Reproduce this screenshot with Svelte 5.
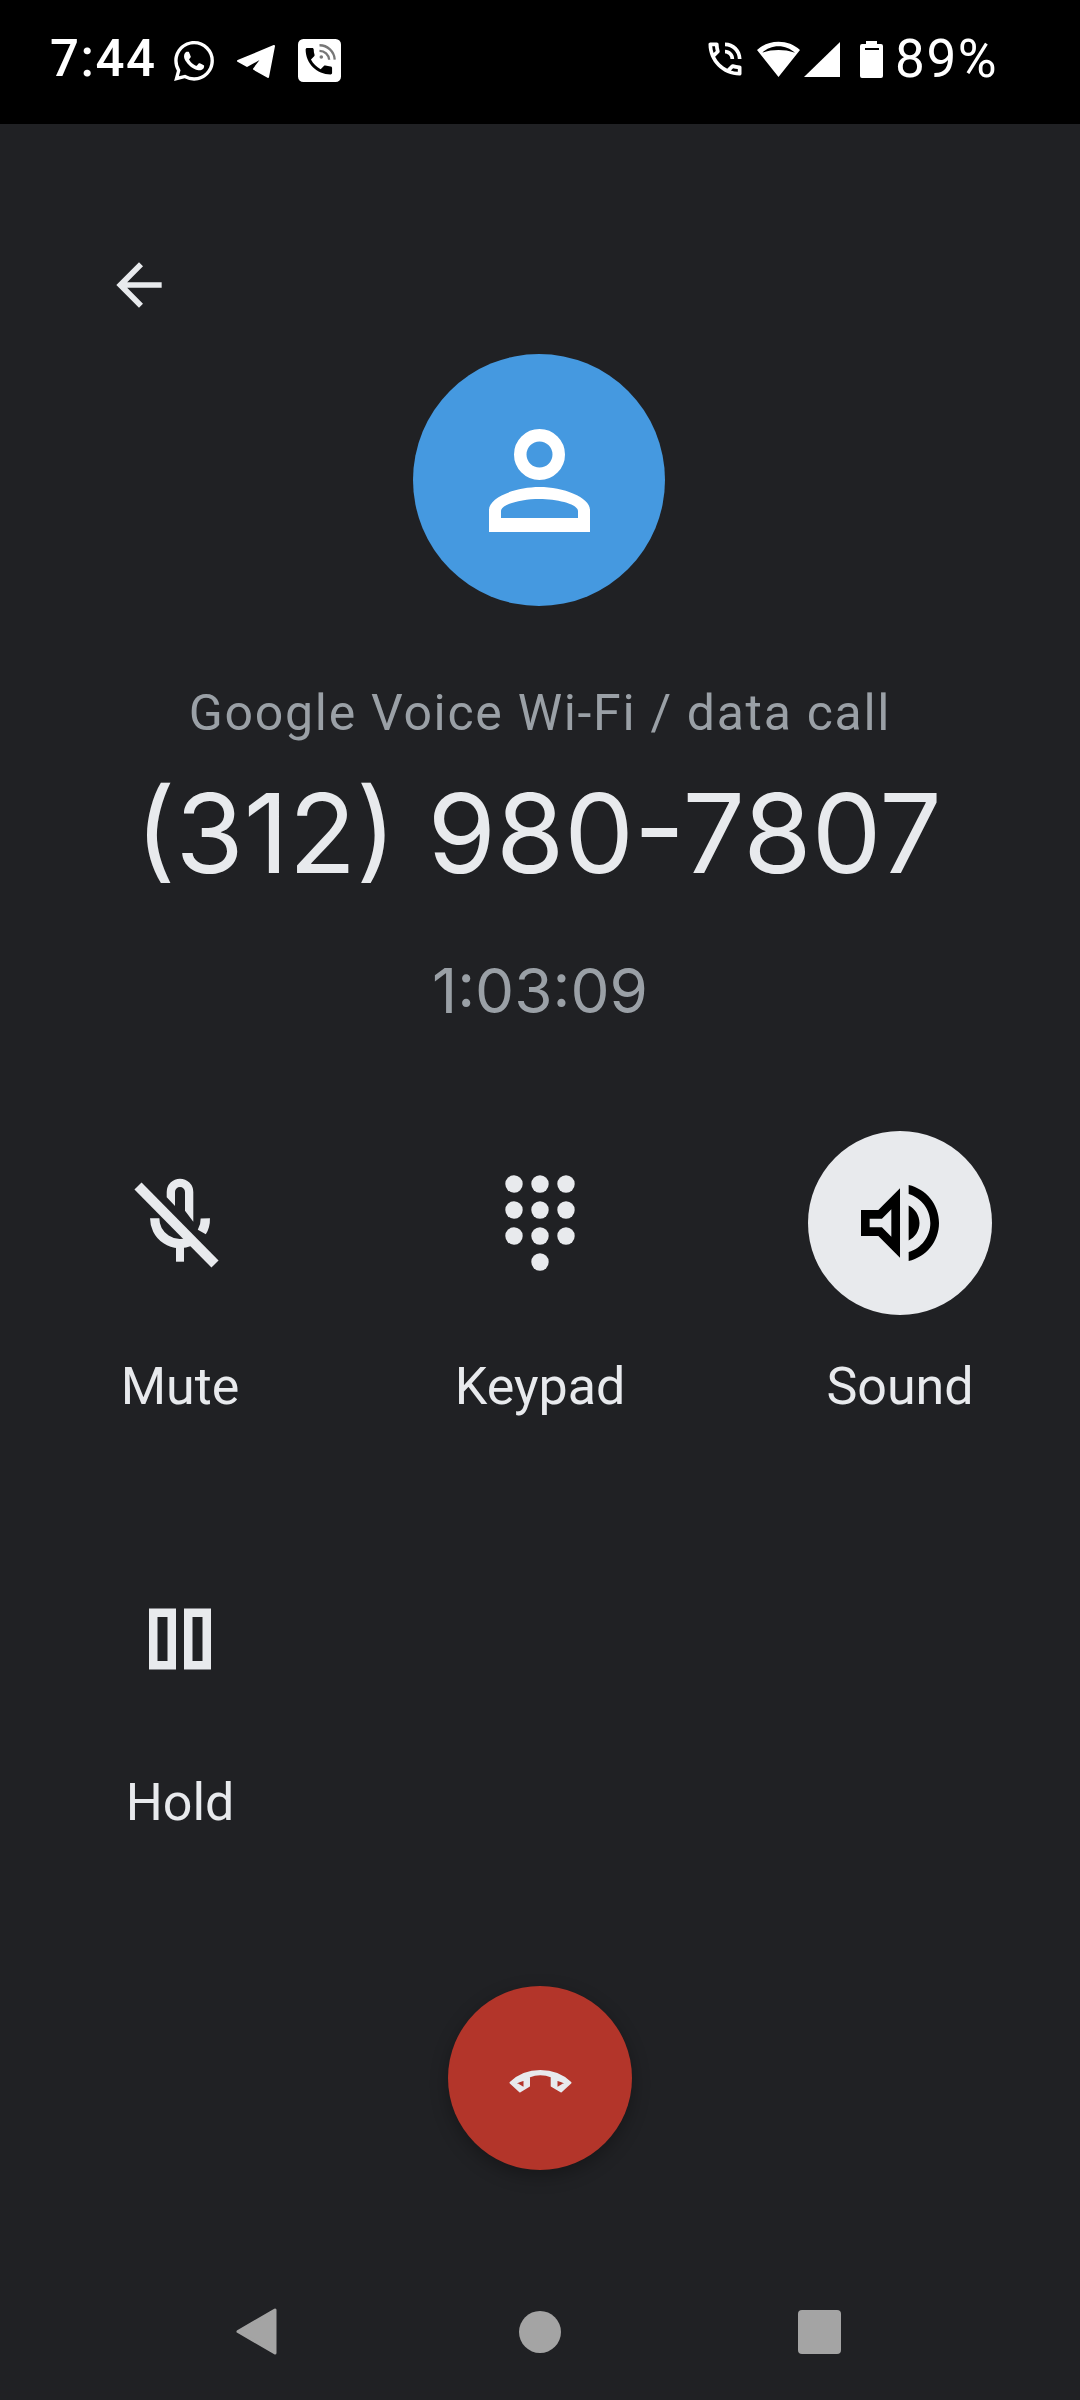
<script>
  const buttons = [
    { label: "Mute", icon: "mute" },
    { label: "Keypad", icon: "keypad" },
    { label: "Sound", icon: "sound", active: true },
    { label: "Hold", icon: "hold" },
  ];
  const dots = [
    [34, 21], [60, 21], [86, 21],
    [34, 47], [60, 47], [86, 47],
    [34, 73], [60, 73], [86, 73],
    [60, 99],
  ];
</script>

<div class="page">
  <header class="status">
    <div class="status-left">
      <span class="clock">7:44</span>
      <svg class="whatsapp" viewBox="0 0 24 24" width="40" height="40">
        <path fill="#fff" d="M17.472 14.382c-.297-.149-1.758-.867-2.03-.967-.273-.099-.471-.148-.67.15-.197.297-.767.966-.94 1.164-.173.199-.347.223-.644.075-.297-.15-1.255-.463-2.39-1.475-.883-.788-1.48-1.761-1.653-2.059-.173-.297-.018-.458.13-.606.134-.133.298-.347.446-.52.149-.174.198-.298.298-.497.099-.198.05-.371-.025-.52-.075-.149-.669-1.612-.916-2.207-.242-.579-.487-.5-.669-.51-.173-.008-.371-.01-.57-.01-.198 0-.52.074-.792.372-.272.297-1.04 1.016-1.04 2.479 0 1.462 1.065 2.875 1.213 3.074.149.198 2.096 3.2 5.077 4.487.709.306 1.262.489 1.694.625.712.227 1.36.195 1.871.118.571-.085 1.758-.719 2.006-1.413.248-.694.248-1.289.173-1.413-.074-.124-.272-.198-.57-.347m-5.421 7.403h-.004a9.87 9.87 0 01-5.031-1.378l-.361-.214-3.741.982.998-3.648-.235-.374a9.86 9.86 0 01-1.51-5.26c.001-5.45 4.436-9.884 9.888-9.884 2.64 0 5.122 1.03 6.988 2.898a9.825 9.825 0 012.893 6.994c-.003 5.45-4.437 9.884-9.885 9.884m8.413-18.297A11.815 11.815 0 0012.05 0C5.495 0 .16 5.335.157 11.892c0 2.096.547 4.142 1.588 5.945L.057 24l6.305-1.654a11.882 11.882 0 005.683 1.448h.005c6.554 0 11.89-5.335 11.893-11.893a11.821 11.821 0 00-3.48-8.413Z" />
      </svg>
      <svg class="telegram" viewBox="0 0 40 36" width="40" height="36">
        <path fill="#fff" stroke="#fff" stroke-width="2" stroke-linejoin="round" d="M2 17 38 2 32 33 18 25 27 13 11 22Z" />
      </svg>
      <svg class="viber" viewBox="0 0 24 24" width="43" height="43">
        <rect width="24" height="24" rx="3" fill="#fff" />
        <path fill="#000" transform="translate(1.8 2.6) scale(.82)" d="M20 15.5c-1.25 0-2.45-.2-3.57-.57-.35-.11-.74-.03-1.02.24l-2.2 2.2c-2.83-1.44-5.15-3.75-6.59-6.59l2.2-2.21c.28-.26.36-.65.25-1C8.7 6.45 8.5 5.25 8.5 4c0-.55-.45-1-1-1H4c-.55 0-1 .45-1 1 0 9.39 7.61 17 17 17 .55 0 1-.45 1-1v-3.5c0-.55-.45-1-1-1z" />
        <path fill="none" stroke="#777" stroke-width="1.3" d="M12 3.5a8.5 8.5 0 0 1 8.5 8M12 6.6a5.4 5.4 0 0 1 5.4 5" />
        <circle cx="13" cy="10" r="1" fill="#777" />
      </svg>
    </div>
    <div class="status-right">
      <svg class="call" viewBox="0 0 24 24" width="44" height="44">
        <path fill="#fff" d="M15 12h2c0-2.76-2.24-5-5-5v2c1.66 0 3 1.34 3 3zm4 0h2c0-4.97-4.03-9-9-9v2c3.87 0 7 3.13 7 7zm1 3.5c-1.25 0-2.45-.2-3.57-.57-.1-.03-.21-.05-.31-.05-.26 0-.51.1-.71.29l-2.2 2.2c-2.83-1.44-5.15-3.75-6.59-6.58l2.2-2.21c.28-.27.36-.66.25-1.01C8.7 6.45 8.5 5.25 8.5 4c0-.55-.45-1-1-1H4c-.55 0-1 .45-1 1 0 9.39 7.61 17 17 17 .55 0 1-.45 1-1v-3.5c0-.55-.45-1-1-1zM5.03 5h1.5c.07.88.22 1.75.45 2.58l-1.2 1.21c-.4-1.21-.66-2.47-.75-3.79zM19 18.97c-1.32-.09-2.6-.35-3.8-.76l1.2-1.2c.85.24 1.71.39 2.59.45v1.51z" />
      </svg>
      <svg class="wifi" viewBox="0 0 43 36" width="43" height="36">
        <path fill="#fff" fill-rule="evenodd" d="M0 9C6 3.5 13 .7 21.5 .7S37 3.500 43 9L21.500 36ZM5 11.700C10 7.500 15 5.300 21.500 5.300S33 7.500 38 11.700C32 9.500 27 8.900 21.500 8.900S11 9.500 5 11.700Z" />
      </svg>
      <svg class="signal" viewBox="0 0 36 35" width="36" height="35">
        <path fill="#fff" d="M0 35 36 0V35Z" />
      </svg>
      <svg class="battery" viewBox="0 0 23 37" width="23" height="37">
        <path fill="#fff" fill-rule="evenodd" d="M6 0H17V3H21A2 2 0 0 1 23 5V35A2 2 0 0 1 21 37H2A2 2 0 0 1 0 35V5A2 2 0 0 1 2 3H6ZM5 7V9H19V7Z" />
      </svg>
      <span class="percent">89%</span>
    </div>
  </header>

  <main class="call-screen">
    <div class="back-row">
      <svg viewBox="0 0 24 24" width="68" height="68">
        <path fill="#e8eaed" d="M20 11H7.830l5.590-5.590L12 4l-8 8 8 8 1.410-1.410L7.830 13H20v-2z" />
      </svg>
    </div>

    <div class="avatar">
      <svg viewBox="0 0 151 151" width="151" height="151">
        <circle cx="75.500" cy="49.500" r="19.250" fill="none" stroke="#fff" stroke-width="12.500" />
        <path fill="#fff" fill-rule="evenodd" d="M25 127V105C25 92 52 82 75.500 82S126 92 126 105V127ZM37 113H114V106C114 99 93 94 75.500 94S37 99 37 106Z" />
      </svg>
    </div>

    <div class="call-type">Google Voice Wi-Fi / data call</div>
    <div class="number">(312) 980-7807</div>
    <div class="timer">1:03:09</div>

    <div class="controls">
      {#each buttons as button}
        <div class="control">
          <div class="control-icon" class:active={button.active}>
            {#if button.icon === "mute"}
              <svg viewBox="0 0 120 120" width="120" height="120">
                <g fill="#e8eaed">
                  <path d="M46.700 34.300V29a13.300 13.300 0 0 1 26.600 0V58.700L65 47.700V29a5 5 0 0 0-10 0V43Z" />
                </g>
                <g fill="none" stroke="#e8eaed">
                  <path stroke-width="9.300" d="M34.700 55.300A25.300 25.300 0 0 0 70 78.500" />
                  <path stroke-width="9.300" d="M85.300 55.300A25.300 25.300 0 0 1 81.800 69" />
                  <path stroke-width="8" d="M60 80.600V98.700" />
                  <path stroke-width="10" d="M18 23 95 101" />
                </g>
              </svg>
            {:else if button.icon === "keypad"}
              <svg viewBox="0 0 120 120" width="120" height="120">
                {#each dots as [x, y]}
                  <circle cx={x} cy={y} r="8.700" fill="#e8eaed" />
                {/each}
              </svg>
            {:else if button.icon === "sound"}
              <svg viewBox="0 0 24 24" width="104" height="104">
                <path fill="#000" d="M3 9v6h4l5 5V4L7 9H3zm7-.17v6.340L7.830 13H5v-2h2.830L10 8.830zM16.500 12c0-1.770-1.020-3.290-2.500-4.030v8.050c1.480-.73 2.500-2.250 2.500-4.020zM14 3.230v2.060c2.890.86 5 3.540 5 6.710s-2.110 5.850-5 6.710v2.060c4.010-.91 7-4.490 7-8.770 0-4.280-2.990-7.860-7-8.770z" />
              </svg>
            {:else}
              <svg viewBox="0 0 120 120" width="120" height="120">
                <g fill="none" stroke="#e8eaed" stroke-width="8.500">
                  <rect x="33.250" y="33.750" width="18.500" height="52.500" />
                  <rect x="68.250" y="33.750" width="18.500" height="52.500" />
                </g>
              </svg>
            {/if}
          </div>
          <div class="control-label">{button.label}</div>
        </div>
      {/each}
    </div>

    <div class="end-call">
      <svg viewBox="0 0 120 120" width="120" height="120">
        <path fill="#e8eaed" stroke="#e8eaed" stroke-width="2" stroke-linejoin="round" fill-rule="evenodd" d="M30.500 64.700C39 56.500 49 53 60.300 53S82 56.500 90.500 64.700L81 73.500 71.700 68V58.500C68 57 64 56.300 60.300 56.300S53 57 49 58.500V68L40 73.500ZM35.500 65 44.500 70.500V61.500C41 62.500 38 63.500 35.500 65ZM85.500 65 76.500 70.500V61.500C80 62.500 83 63.500 85.500 65Z" />
      </svg>
    </div>

    <nav class="nav">
      <svg class="nav-back" viewBox="0 0 41 47" width="41" height="47">
        <path fill="#a4a4a4" stroke="#a4a4a4" stroke-width="3" stroke-linejoin="round" d="M39 2V45L2 23.500Z" />
      </svg>
      <div class="nav-home"></div>
      <div class="nav-recent"></div>
    </nav>
  </main>
</div>

<style>
  :global(body) {
    margin: 0;
    background: #202124;
  }

  .page {
    width: 1080px;
    height: 2400px;
    overflow: hidden;
    background: #202124;
    font-family: Roboto, "Liberation Sans", sans-serif;
    color: #e8eaed;
  }

  svg {
    display: block;
    flex: none;
  }

  .status {
    height: 124px;
    background: #000;
    color: #fff;
    display: flex;
    justify-content: space-between;
    padding: 0 82px 0 50px;
    box-sizing: border-box;
  }

  .status-left,
  .status-right {
    display: flex;
    align-items: flex-start;
  }

  .clock {
    font-size: 51px;
    font-weight: 500;
    line-height: 60px;
    margin-top: 29px;
    letter-spacing: 1.500px;
  }

  .whatsapp {
    margin: 41px 0 0 18px;
  }

  .telegram {
    margin: 44px 0 0 22px;
  }

  .viber {
    margin: 39px 0 0 22px;
  }

  .call {
    margin-top: 37px;
  }

  .wifi {
    margin: 41px 0 0 10px;
  }

  .signal {
    margin: 42px 0 0 4px;
  }

  .battery {
    margin: 41px 0 0 20px;
  }

  .percent {
    font-size: 53px;
    line-height: 60px;
    margin: 29px 0 0 12px;
    letter-spacing: 1.500px;
  }

  .call-screen {
    display: flex;
    flex-direction: column;
    align-items: center;
  }

  .back-row {
    align-self: stretch;
    margin-top: 127px;
    padding-left: 105px;
  }

  .avatar {
    width: 252px;
    height: 252px;
    margin: 35px 2px 0 0;
    border-radius: 50%;
    background: #4599e0;
    display: flex;
    align-items: center;
    justify-content: center;
  }

  .call-type {
    margin-top: 77px;
    font-size: 50px;
    line-height: 60px;
    letter-spacing: 1.700px;
    color: #9aa0a6;
  }

  .number {
    margin: 25px 3px 0 0;
    font-family: Inter, Roboto, sans-serif;
    font-weight: 400;
    font-size: 110.500px;
    line-height: 130px;
    color: #e8eaed;
  }

  .timer {
    margin-top: 58px;
    font-family: Inter, Roboto, sans-serif;
    font-weight: 400;
    font-size: 62px;
    line-height: 70px;
    color: #9aa0a6;
  }

  .controls {
    align-self: stretch;
    margin-top: 105px;
    display: grid;
    grid-template-columns: repeat(3, 360px);
    row-gap: 129.500px;
  }

  .control {
    display: flex;
    flex-direction: column;
    align-items: center;
  }

  .control-icon {
    width: 184px;
    height: 184px;
    border-radius: 50%;
    display: flex;
    align-items: center;
    justify-content: center;
  }

  .control-icon.active {
    background: #e8eaed;
  }

  .control-label {
    margin-top: 42px;
    font-size: 52px;
    line-height: 60px;
  }

  .end-call {
    width: 184px;
    height: 184px;
    margin-top: 153.500px;
    border-radius: 50%;
    background: #b3352a;
    box-shadow: 0 6px 18px rgba(0, 0, 0, 0.3);
    display: flex;
    align-items: center;
    justify-content: center;
  }

  .nav {
    align-self: stretch;
    margin-top: 138px;
    padding-left: 236px;
    display: flex;
    align-items: center;
    height: 47px;
  }

  .nav-home {
    width: 42px;
    height: 42px;
    margin-left: 242px;
    border-radius: 50%;
    background: #a4a4a4;
  }

  .nav-recent {
    width: 43px;
    height: 44px;
    margin-left: 237px;
    border-radius: 4px;
    background: #a4a4a4;
  }
</style>
